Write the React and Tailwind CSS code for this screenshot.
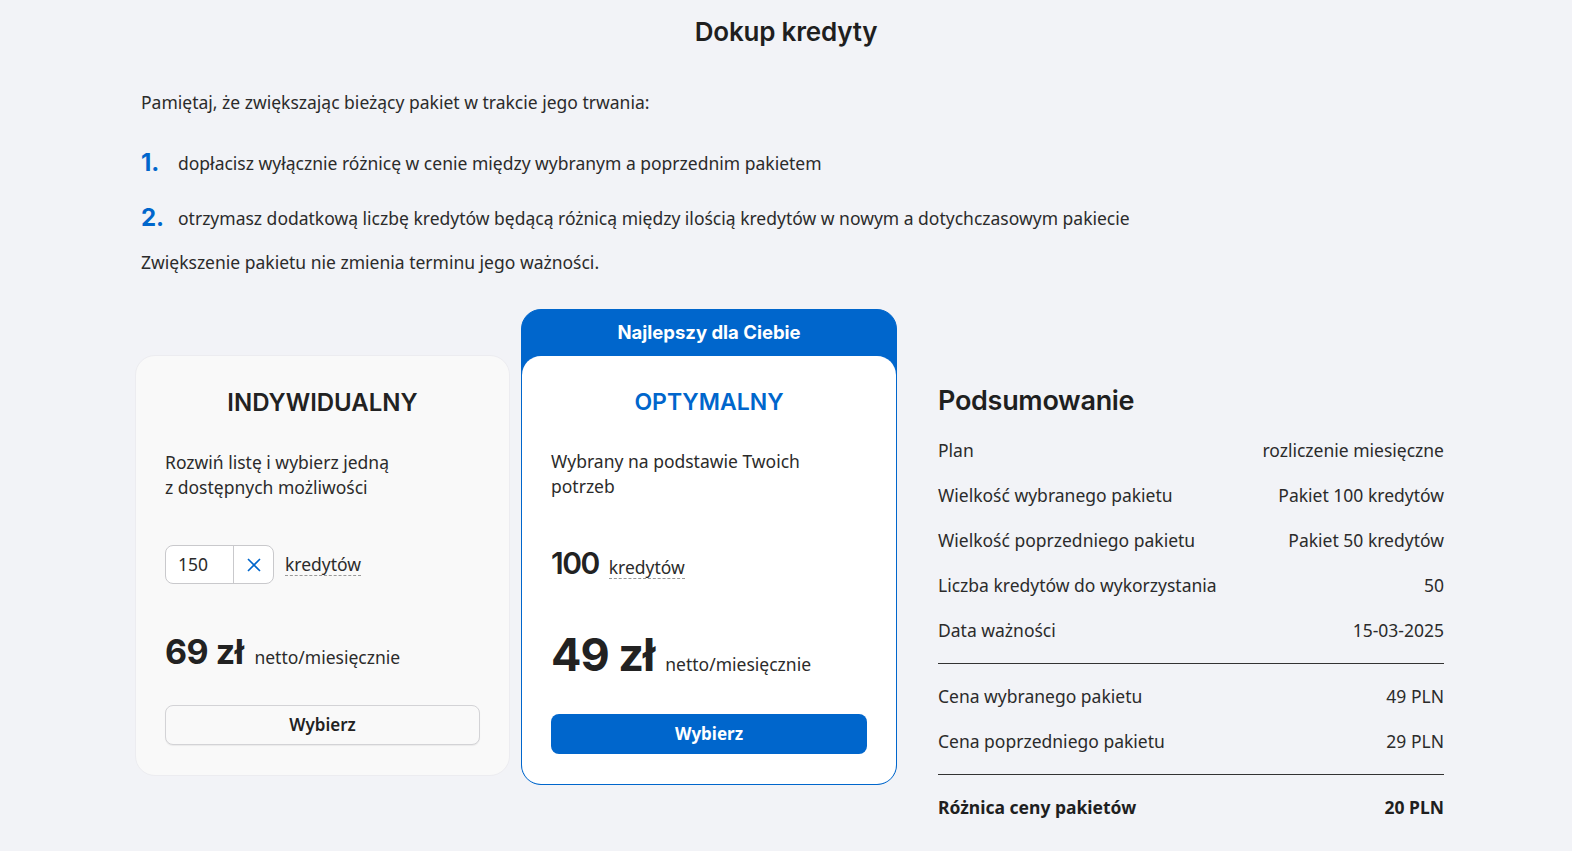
import React, { useState } from "react";

const summaryTop = [
  ["Plan", "rozliczenie miesięczne"],
  ["Wielkość wybranego pakietu", "Pakiet 100 kredytów"],
  ["Wielkość poprzedniego pakietu", "Pakiet 50 kredytów"],
  ["Liczba kredytów do wykorzystania", "50"],
  ["Data ważności", "15-03-2025"],
];

const summaryPrices = [
  ["Cena wybranego pakietu", "49 PLN"],
  ["Cena poprzedniego pakietu", "29 PLN"],
];

function Row({ label, value, bold }) {
  return (
    <div
      className={`h-[45px] flex items-center justify-between text-[17.5px] ${
        bold ? "font-bold text-[#1f1f1f]" : "text-[#2b2b2b]"
      }`}
    >
      <span>{label}</span>
      <span>{value}</span>
    </div>
  );
}

function App() {
  const [credits, setCredits] = useState("150");

  return (
    <div className="min-h-screen bg-[#f2f3f7] font-['Noto_Sans',sans-serif] text-[#2b2b2b]">
      <div className="w-[1309px] ml-[135px]">
        <h1 className="pt-[14px] -ml-[135px] w-[1572px] text-center text-[26px] leading-[36px] font-semibold text-[#1f1f1f] font-['Inter',sans-serif] tracking-[-0.2px]">
          Dokup kredyty
        </h1>

        <div className="pl-[6px] text-[17.5px]">
          <p className="mt-[40px] leading-[24px]">
            Pamiętaj, że zwiększając bieżący pakiet w trakcie jego trwania:
          </p>
          <div className="mt-[37px] flex items-center h-[24px]">
            <span className="w-[37px] text-[24px] font-bold text-[#0066cc] font-['Inter',sans-serif]">
              1.
            </span>
            <span>dopłacisz wyłącznie różnicę w cenie między wybranym a poprzednim pakietem</span>
          </div>
          <div className="mt-[31px] flex items-center h-[24px]">
            <span className="w-[37px] text-[24px] font-bold text-[#0066cc] font-['Inter',sans-serif]">
              2.
            </span>
            <span>
              otrzymasz dodatkową liczbę kredytów będącą różnicą między ilością kredytów w nowym a dotychczasowym pakiecie
            </span>
          </div>
          <p className="mt-[20px] leading-[24px]">Zwiększenie pakietu nie zmienia terminu jego ważności.</p>
        </div>

        <div className="mt-[35px] flex items-start">
          {/* Indywidualny */}
          <div className="mt-[46px] w-[375px] rounded-[20px] bg-[#f9f9f9] border border-[#ececf0] px-[29px] pt-[31px] pb-[30px]">
            <h2 className="text-center text-[24px] leading-[32px] font-semibold text-[#222] font-['Inter',sans-serif]">
              INDYWIDUALNY
            </h2>
            <p className="mt-[31px] text-[17.5px] leading-[25px]">
              Rozwiń listę i wybierz jedną
              <br />z dostępnych możliwości
            </p>
            <div className="mt-[45px] flex items-center gap-[11px]">
              <div className="flex h-[39px] w-[109px] rounded-[8px] border border-[#c9c9cc] bg-white overflow-hidden">
                <input
                  value={credits}
                  onChange={(e) => setCredits(e.target.value)}
                  className="w-[67px] px-[12px] text-[17.5px] outline-none bg-transparent"
                />
                <button
                  onClick={() => setCredits("")}
                  className="flex-1 flex items-center justify-center border-l border-[#c9c9cc] text-[#0066cc]"
                >
                  <svg width="16" height="16" viewBox="0 0 16 16" fill="none" stroke="currentColor" strokeWidth="1.6">
                    <path d="M2 2L14 14M14 2L2 14" />
                  </svg>
                </button>
              </div>
              <span className="text-[17.5px] leading-[21px] border-b border-dashed border-[#999]">kredytów</span>
            </div>
            <div className="mt-[46px] flex items-baseline gap-[11px]">
              <span className="text-[34px] leading-[44px] font-bold text-[#222] font-['Inter',sans-serif] tracking-[-0.5px]">
                69 zł
              </span>
              <span className="text-[17.5px]">netto/miesięcznie</span>
            </div>
            <button className="mt-[31px] w-full h-[40px] rounded-[8px] border border-[#d3d3d6] bg-[#f9f9f9] text-[17px] font-semibold text-[#222] shadow-[0_1px_1px_rgba(0,0,0,0.06)]">
              Wybierz
            </button>
          </div>

          {/* Optymalny */}
          <div className="ml-[11px] w-[376px] rounded-[20px] bg-[#0066cc] border border-[#0066cc]">
            <div className="h-[46px] flex items-center justify-center text-white text-[18.5px] font-bold font-['Inter',sans-serif]">
              Najlepszy dla Ciebie
            </div>
            <div className="rounded-[19px] bg-white px-[29px] pt-[30px] pb-[30px]">
              <h2 className="text-center text-[23px] leading-[32px] font-semibold text-[#0066cc] font-['Inter',sans-serif]">
                OPTYMALNY
              </h2>
              <p className="mt-[31px] text-[17.5px] leading-[25px]">
                Wybrany na podstawie Twoich
                <br />
                potrzeb
              </p>
              <div className="mt-[46px] flex items-baseline gap-[10px] h-[36px]">
                <span className="text-[30px] leading-[36px] font-semibold text-[#222] font-['Inter',sans-serif] tracking-[-1.5px]">
                  100
                </span>
                <span className="text-[17.5px] leading-[21px] border-b border-dashed border-[#999]">kredytów</span>
              </div>
              <div className="mt-[46px] flex items-baseline gap-[11px]">
                <span className="text-[45px] leading-[56px] font-bold text-[#222] font-['Inter',sans-serif] tracking-[-1px]">
                  49 zł
                </span>
                <span className="text-[17.5px]">netto/miesięcznie</span>
              </div>
              <button className="mt-[31px] w-full h-[40px] rounded-[8px] bg-[#0066cc] text-[17px] font-bold text-white">
                Wybierz
              </button>
            </div>
          </div>

          {/* Podsumowanie */}
          <div className="ml-[41px] mt-[75px] flex-1">
            <h2 className="text-[27px] leading-[34px] font-semibold text-[#1f1f1f] font-['Inter',sans-serif] tracking-[-0.3px]">
              Podsumowanie
            </h2>
            <div className="mt-[10px]">
              {summaryTop.map(([l, v]) => (
                <Row key={l} label={l} value={v} />
              ))}
            </div>
            <div className="mt-[10px] border-t border-[#333]" />
            <div className="mt-[10px]">
              {summaryPrices.map(([l, v]) => (
                <Row key={l} label={l} value={v} />
              ))}
            </div>
            <div className="mt-[10px] border-t border-[#333]" />
            <div className="mt-[10px]">
              <Row label="Różnica ceny pakietów" value="20 PLN" bold />
            </div>
          </div>
        </div>
      </div>
    </div>
  );
}

export default App;
